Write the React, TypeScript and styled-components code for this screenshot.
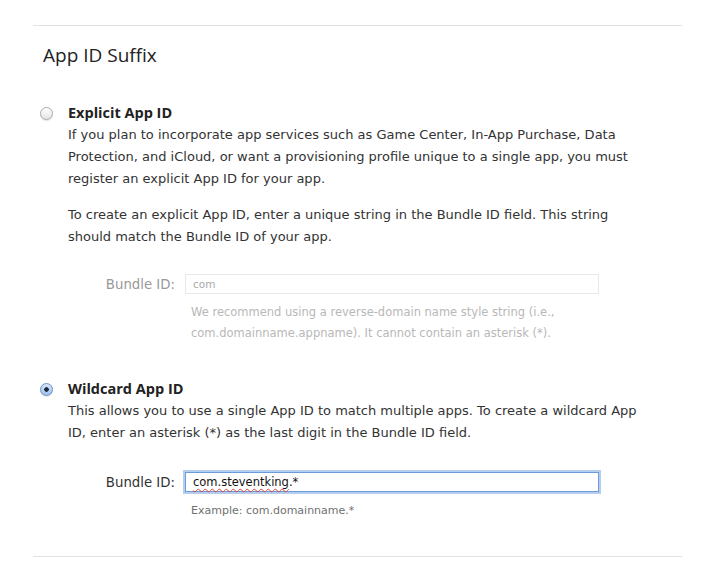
import React from "react";
import styled, { createGlobalStyle } from "styled-components";

const Global = createGlobalStyle`
  body {
    margin: 0;
    background: #fff;
    font-family: "DejaVu Sans", "Open Sans", sans-serif;
    color: #333;
  }
`;

const Page = styled.div`
  width: 722px;
  height: 570px;
  padding: 25px 40px 0 33px;
  box-sizing: border-box;
`;

const Rule = styled.div`
  border-top: 1px solid #e2e2e2;
`;

const Heading = styled.h2`
  margin: 17px 0 0 10px;
  font-family: "Open Sans", sans-serif;
  font-size: 19px;
  font-weight: 400;
  color: #222;
  line-height: 24px;
`;

const Option = styled.div<{ $top: number }>`
  display: grid;
  grid-template-columns: 35px 1fr;
  margin-top: ${(p) => p.$top}px;
`;

const RadioCell = styled.div`
  display: flex;
  justify-content: flex-start;
  padding-top: 5px;
  padding-left: 7px;
`;

const Radio = styled.span<{ $checked?: boolean }>`
  width: 13px;
  height: 13px;
  border-radius: 50%;
  box-sizing: border-box;
  border: 1px solid ${(p) => (p.$checked ? "#6a8fc6" : "#a9a9a9")};
  background: ${(p) =>
    p.$checked
      ? "radial-gradient(circle at 50% 50%, #1e2a3a 0 2px, transparent 2.5px), linear-gradient(#d8e6fb, #9fc0ee)"
      : "linear-gradient(#ffffff, #e4e4e4)"};
  box-shadow: 0 1px 1px rgba(0, 0, 0, 0.12);
`;

const Title = styled.div`
  font-family: "Open Sans", sans-serif;
  font-size: 14.5px;
  font-weight: 700;
  color: #222;
  line-height: 22px;
`;

const Para = styled.p`
  margin: 0;
  font-size: 13px;
  line-height: 22px;
  color: #333;
  white-space: nowrap;
`;

const Gap = styled.div`
  height: 14px;
`;

const FieldRow = styled.div<{ $top: number }>`
  display: grid;
  grid-template-columns: 142px 414px;
  column-gap: 10px;
  align-items: center;
  margin-top: ${(p) => p.$top}px;
`;

const Label = styled.div<{ $disabled?: boolean }>`
  text-align: right;
  font-size: 13.3px;
  color: ${(p) => (p.$disabled ? "#999" : "#333")};
`;

const FakeInput = styled.div<{ $focused?: boolean }>`
  height: 20px;
  box-sizing: border-box;
  padding: 0 7px;
  display: flex;
  align-items: center;
  font-size: ${(p) => (p.$focused ? "11.5px" : "10.5px")};
  color: ${(p) => (p.$focused ? "#111" : "#aaa")};
  border: 1px solid ${(p) => (p.$focused ? "#6d9bd8" : "#e8e8e8")};
  box-shadow: ${(p) =>
    p.$focused ? "0 0 0 2px rgba(120, 165, 225, 0.55)" : "none"};
  background: #fff;
`;

const Misspelled = styled.span`
  text-decoration: underline wavy #e0403a;
  text-decoration-thickness: 1px;
  text-underline-offset: 2px;
`;

const Help = styled.div<{ $light?: boolean }>`
  margin: 8px 0 0 158px;
  font-size: ${(p) => (p.$light ? "11.5px" : "11px")};
  line-height: 21px;
  color: ${(p) => (p.$light ? "#b8b8b8" : "#707070")};
  white-space: nowrap;
`;

const Bottom = styled(Rule)`
  margin-top: 35px;
`;

export default function App() {
  return (
    <Page>
      <Global />
      <Rule />
      <Heading>App ID Suffix</Heading>

      <Option $top={35}>
        <RadioCell>
          <Radio />
        </RadioCell>
        <div>
          <Title>Explicit App ID</Title>
          <Para>
            If you plan to incorporate app services such as Game Center, In-App Purchase, Data
            <br />
            Protection, and iCloud, or want a provisioning profile unique to a single app, you must
            <br />
            register an explicit App ID for your app.
          </Para>
          <Gap />
          <Para>
            To create an explicit App ID, enter a unique string in the Bundle ID field. This string
            <br />
            should match the Bundle ID of your app.
          </Para>
        </div>
      </Option>
      <FieldRow $top={26}>
        <Label $disabled>Bundle ID:</Label>
        <FakeInput>com</FakeInput>
      </FieldRow>
      <Help $light>
        We recommend using a reverse-domain name style string (i.e.,
        <br />
        com.domainname.appname). It cannot contain an asterisk (*).
      </Help>

      <Option $top={34}>
        <RadioCell>
          <Radio $checked />
        </RadioCell>
        <div>
          <Title>Wildcard App ID</Title>
          <Para>
            This allows you to use a single App ID to match multiple apps. To create a wildcard App
            <br />
            ID, enter an asterisk (*) as the last digit in the Bundle ID field.
          </Para>
        </div>
      </Option>
      <FieldRow $top={28}>
        <Label>Bundle ID:</Label>
        <FakeInput $focused>
          <Misspelled>com.steventking</Misspelled>.*
        </FakeInput>
      </FieldRow>
      <Help>Example: com.domainname.*</Help>

      <Bottom />
    </Page>
  );
}
